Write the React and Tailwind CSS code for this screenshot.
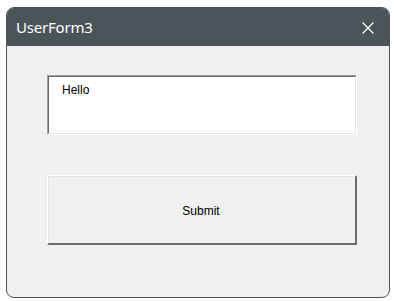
export default function App() {
  return (
    <div className="w-[394px] h-[301px] bg-white pt-[7px] pl-[6px]">
      {/* Window */}
      <div className="w-[384px] h-[291px] rounded-[8px] border border-[#4b5459] bg-[#f0f0f0] overflow-hidden flex flex-col">
        {/* Title bar */}
        <div className="h-[38px] bg-[#4b5459] flex items-center justify-between pl-[9px] pr-[14px] shrink-0">
          <span className="text-[15px] text-white font-['Noto_Sans',sans-serif] tracking-[-0.2px]">UserForm3</span>
          <svg width="14" height="14" viewBox="0 0 14 14" className="mt-[1px]">
            <path d="M1.5 1.5 L12.5 12.5 M12.5 1.5 L1.5 12.5" stroke="#ffffff" strokeWidth="1.2" fill="none" />
          </svg>
        </div>

        {/* Body */}
        <div className="flex flex-col gap-[40px] pt-[29px] pl-[40px] font-['Liberation_Sans',Arial,sans-serif] text-[12px] text-black">
          {/* TextBox, sunken */}
          <div className="w-[310px] h-[60px] border border-t-[#a0a0a0] border-l-[#a0a0a0] border-r-white border-b-white">
            <div className="w-full h-full border border-t-[#696969] border-l-[#696969] border-r-[#e3e3e3] border-b-[#e3e3e3] bg-white pl-[13px] pt-[4px]">
              Hello
            </div>
          </div>

          {/* CommandButton, raised */}
          <div className="w-[310px] h-[70px] border border-t-white border-l-white border-r-[#696969] border-b-[#696969]">
            <div className="w-full h-full border border-t-[#e3e3e3] border-l-[#e3e3e3] border-r-[#6d6d6d] border-b-[#6d6d6d] flex items-center justify-center pr-[2px] pt-[1px]">
              Submit
            </div>
          </div>
        </div>
      </div>
    </div>
  );
}
